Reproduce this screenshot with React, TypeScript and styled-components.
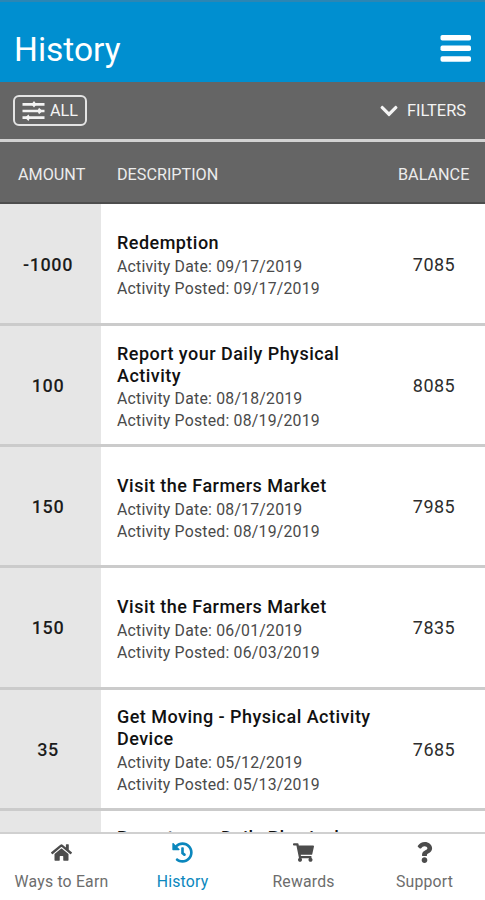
import React from "react";
import styled, { createGlobalStyle } from "styled-components";
import { FaChevronDown, FaHistory, FaHome, FaQuestion, FaShoppingCart } from "react-icons/fa";

const GlobalStyle = createGlobalStyle`
  * { box-sizing: border-box; }
  body { margin: 0; font-family: Roboto, "Liberation Sans", sans-serif; background: #fff; }
`;

const Screen = styled.div`
  display: flex;
  flex-direction: column;
  width: 485px;
  height: 900px;
  overflow: hidden;
`;

const TopBar = styled.header`
  display: flex;
  flex: none;
  align-items: center;
  justify-content: space-between;
  height: 82px;
  padding: 16px 14px 0 14px;
  border-top: 2px solid #2b86b4;
  background: #008fd0;
  color: #fff;
`;

const Title = styled.h1`
  margin: 0;
  font-size: 33.5px;
  font-weight: 400;
  line-height: 40px;
`;

const MenuButton = styled.button`
  display: flex;
  padding: 0;
  margin-bottom: 4px;
  border: 0;
  background: none;
  color: #fff;
`;

const FilterBar = styled.div`
  display: flex;
  flex: none;
  align-items: center;
  justify-content: space-between;
  height: 60px;
  padding: 0 19px 0 13px;
  border-bottom: 3px solid #d2d2d2;
  background: #656565;
  color: #f4f4f4;
`;

const AllButton = styled.button`
  display: flex;
  align-items: center;
  gap: 5px;
  width: 74px;
  height: 31px;
  padding: 0 0 0 7px;
  border: 2px solid #e4e4e4;
  border-radius: 6px;
  background: none;
  color: inherit;
  font: 400 16.2px Roboto, sans-serif;
`;

const FiltersButton = styled.button`
  display: flex;
  align-items: center;
  gap: 8px;
  padding: 0;
  border: 0;
  background: none;
  color: inherit;
  font: 400 16.4px Roboto, sans-serif;
`;

const columns = "101px 1fr 104px";

const TableHead = styled.div`
  display: grid;
  flex: none;
  grid-template-columns: ${columns};
  align-items: center;
  height: 62px;
  border-bottom: 2px solid #4d4d4d;
  background: #656565;
  color: #ececec;
  font-size: 16.2px;
`;

const HeadCell = styled.div<{ $inset: number }>`
  padding: 4px 0 0 ${(p) => p.$inset}px;
`;

const List = styled.main`
  flex: 1;
  min-height: 0;
  overflow: hidden;
`;

const Amount = styled.div`
  display: flex;
  align-items: center;
  justify-content: center;
  padding: 1px 5px 0 0;
  background: #e6e6e6;
  color: #1c1c1c;
  font-size: 18px;
  font-weight: 500;
  letter-spacing: 0.6px;
`;

const Description = styled.div`
  display: flex;
  flex-direction: column;
  justify-content: center;
  padding: 5px 0 0 16px;
`;

const Row = styled.article`
  display: grid;
  grid-template-columns: ${columns};
  height: 121.2px;
  border-bottom: 3px solid #cbcbcb;

  &:first-child { height: 122px; }
  &:last-child ${Description} { padding-top: 3px; }
`;

const Activity = styled.h2`
  margin: 0 0 1.5px;
  color: #111;
  font-size: 18px;
  font-weight: 500;
  line-height: 22px;
  letter-spacing: 0.47px;
`;

const Detail = styled.div`
  color: #4a4a4a;
  font-size: 15.8px;
  line-height: 22px;
  letter-spacing: 0.22px;
`;

const Balance = styled.div`
  display: flex;
  align-items: center;
  justify-content: center;
  padding: 1px 0 0 2px;
  color: #2d2d2d;
  font-size: 18px;
  letter-spacing: 0.5px;
`;

const TabBar = styled.nav`
  display: grid;
  flex: none;
  grid-template-columns: repeat(4, 1fr);
  height: 68px;
  padding-left: 1px;
  border-top: 2px solid #d0d0d0;
  background: #fff;
`;

const Tab = styled.a<{ $active?: boolean }>`
  display: flex;
  flex-direction: column;
  align-items: center;
  padding-top: 8px;
  gap: 8px;
  color: ${(p) => (p.$active ? "#0b87bd" : "#6d6d6d")};
  font-size: 15.8px;
  line-height: 22px;
  letter-spacing: 0.2px;

  svg { color: ${(p) => (p.$active ? "#0b87bd" : "#4c4c4c")}; }
`;

const MenuIcon = () => (
  <svg width="31" height="27" viewBox="0 0 31 27" fill="currentColor">
    <rect x=".5" width="30.5" height="5.5" rx="1.8" />
    <rect x=".5" y="10.6" width="30.5" height="5.5" rx="1.8" />
    <rect x=".5" y="21.2" width="30.5" height="5.5" rx="1.8" />
  </svg>
);

const SlidersIcon = () => (
  <svg width="23" height="20" viewBox="0 0 23 20" fill="none" stroke="currentColor" strokeWidth="2.7">
    <path d="M.5 3.3h22M.5 10h22M.5 16.7h22" />
    <path d="M12 0 14.5 3.3 12 6.6 9.5 3.3ZM17 6.7 20.5 10 17 13.3 15.5 10ZM6.5 13.4 8 16.7 6.5 20 3 16.7Z" fill="currentColor" stroke="none" />
  </svg>
);

const entries = [
  { amount: "-1000", title: "Redemption", date: "09/17/2019", posted: "09/17/2019", balance: "7085" },
  { amount: "100", title: "Report your Daily Physical Activity", date: "08/18/2019", posted: "08/19/2019", balance: "8085" },
  { amount: "150", title: "Visit the Farmers Market", date: "08/17/2019", posted: "08/19/2019", balance: "7985" },
  { amount: "150", title: "Visit the Farmers Market", date: "06/01/2019", posted: "06/03/2019", balance: "7835" },
  { amount: "35", title: "Get Moving - Physical Activity Device", date: "05/12/2019", posted: "05/13/2019", balance: "7685" },
  { amount: "100", title: "Report your Daily Physical Activity", date: "05/11/2019", posted: "05/12/2019", balance: "7650" },
];

const tabs = [
  { label: "Ways to Earn", Icon: FaHome, active: false },
  { label: "History", Icon: FaHistory, active: true },
  { label: "Rewards", Icon: FaShoppingCart, active: false },
  { label: "Support", Icon: FaQuestion, active: false },
];

export default function App() {
  return (
    <Screen>
      <GlobalStyle />
      <TopBar>
        <Title>History</Title>
        <MenuButton aria-label="Menu"><MenuIcon /></MenuButton>
      </TopBar>
      <FilterBar>
        <AllButton><SlidersIcon />ALL</AllButton>
        <FiltersButton><FaChevronDown size={20} />FILTERS</FiltersButton>
      </FilterBar>
      <TableHead>
        <HeadCell $inset={18}>AMOUNT</HeadCell>
        <HeadCell $inset={16}>DESCRIPTION</HeadCell>
        <HeadCell $inset={17}>BALANCE</HeadCell>
      </TableHead>
      <List>
        {entries.map((e, i) => (
          <Row key={i}>
            <Amount>{e.amount}</Amount>
            <Description>
              <Activity>{e.title}</Activity>
              <Detail>Activity Date: {e.date}</Detail>
              <Detail>Activity Posted: {e.posted}</Detail>
            </Description>
            <Balance>{e.balance}</Balance>
          </Row>
        ))}
      </List>
      <TabBar>
        {tabs.map(({ label, Icon, active }) => (
          <Tab key={label} $active={active}><Icon size={21} />{label}</Tab>
        ))}
      </TabBar>
    </Screen>
  );
}
